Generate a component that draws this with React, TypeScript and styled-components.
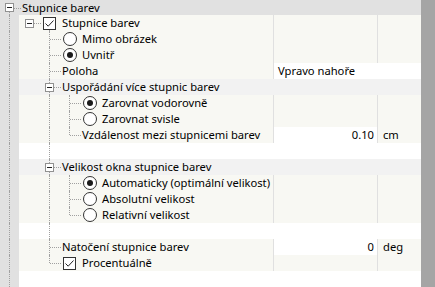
import * as React from "react";
import styled, { createGlobalStyle } from "styled-components";

const GlobalStyle = createGlobalStyle`
  html, body {
    margin: 0;
    padding: 0;
    background: #ffffff;
  }
  body {
    font-family: "Noto Sans", "Open Sans", sans-serif;
    font-size: 11.2px;
    color: #000000;
  }
`;

type Tone = "header" | "group" | "item" | "blank";

interface SlotDef {
  up?: boolean;
  down?: boolean;
  right?: boolean;
  mark?: "expander" | "check" | "radio" | "radioOn";
}

interface RowDef {
  tone: Tone;
  slots: SlotDef[];
  label?: string;
  value?: string;
  unit?: string;
  edit?: "value" | "wide";
}

const Window = styled.div`
  display: flex;
  width: 435px;
  height: 287px;
  overflow: hidden;
`;

const Grid = styled.div`
  flex: 1;
  display: flex;
  flex-direction: column;
  min-width: 0;
`;

const ScrollTrack = styled.div`
  width: 14px;
  background: #a5a5a5;
`;

const toneBg: Record<Tone, string> = {
  header: "#e1e1e1",
  group: "#f2f2f2",
  item: "#f8f8f3",
  blank: "#ffffff",
};

const Row = styled.div<{ $tone: Tone }>`
  display: flex;
  height: ${(p) => (p.$tone === "header" ? 15 : 16)}px;
  line-height: ${(p) => (p.$tone === "header" ? 15 : 16)}px;
  background: ${(p) => toneBg[p.$tone]};
  white-space: nowrap;
`;

const Filler = styled.div`
  flex: 1;
  display: flex;
  background: #ffffff;
`;

const LabelCell = styled.div`
  flex: 1;
  display: flex;
  align-items: stretch;
  min-width: 0;
`;

const Slot = styled.div<{ $first: boolean; $up: boolean; $down: boolean; $right: boolean }>`
  position: relative;
  flex: 0 0 ${(p) => (p.$first ? 19 : 20)}px;
  display: flex;
  align-items: center;
  justify-content: ${(p) => (p.$first ? "flex-start" : "center")};
  padding-left: ${(p) => (p.$first ? 5 : 1)}px;
  box-sizing: border-box;
  background: ${(p) => (p.$first ? "#e1e1e1" : "transparent")};

  &::before {
    content: "";
    display: ${(p) => (p.$up || p.$down ? "block" : "none")};
    position: absolute;
    left: ${(p) => (p.$first ? 9 : 10)}px;
    top: ${(p) => (p.$up ? 0 : 8)}px;
    bottom: ${(p) => (p.$down ? 0 : 8)}px;
    border-left: 1px dotted #a0a0a0;
  }

  &::after {
    content: "";
    display: ${(p) => (p.$right ? "block" : "none")};
    position: absolute;
    left: ${(p) => (p.$first ? 10 : 11)}px;
    right: -2px;
    top: 8px;
    border-top: 1px dotted #a0a0a0;
  }
`;

const Expander = styled.span`
  position: relative;
  z-index: 1;
  width: 9px;
  height: 9px;
  box-sizing: border-box;
  border: 1px solid #919191;
  background: #ffffff;
  display: flex;
  align-items: center;
  justify-content: center;

  &::before {
    content: "";
    width: 5px;
    height: 1px;
    background: #222222;
  }
`;

const CheckBox = styled.span`
  position: relative;
  z-index: 1;
  width: 13px;
  height: 13px;
  box-sizing: border-box;
  border: 1px solid #333333;
  background: #ffffff;
  display: flex;
  align-items: center;
  justify-content: center;
`;

const Radio = styled.span<{ $on: boolean }>`
  position: relative;
  z-index: 1;
  width: 14px;
  height: 14px;
  box-sizing: border-box;
  border: 1px solid #333333;
  border-radius: 50%;
  background: #ffffff;
  display: flex;
  align-items: center;
  justify-content: center;

  &::before {
    content: "";
    display: ${(p) => (p.$on ? "block" : "none")};
    width: 6px;
    height: 6px;
    border-radius: 50%;
    background: #1a1a1a;
  }
`;

const Label = styled.span`
  padding-left: 3px;
`;

const ValueCell = styled.div<{ $edit: boolean; $wide: boolean }>`
  flex: 0 0 ${(p) => (p.$wide ? 148 : 104)}px;
  border-left: 1px solid #e0e0e0;
  background: ${(p) => (p.$edit ? "#ffffff" : "transparent")};
  text-align: ${(p) => (p.$wide ? "left" : "right")};
  padding: ${(p) => (p.$wide ? "0 0 0 4px" : "0 3px 0 0")};
  box-sizing: border-box;
  height: 16px;
`;

const UnitCell = styled.div`
  flex: 0 0 44px;
  border-left: 1px solid #e0e0e0;
  padding-left: 5px;
  box-sizing: border-box;
`;

const CheckMark = () => (
  <svg width="11" height="11" viewBox="0 0 11 11">
    <path d="M1.5 5.5 L4.2 8.2 L9.5 2.5" fill="none" stroke="#222" strokeWidth="1" />
  </svg>
);

const pass: SlotDef = { up: true, down: true };
const empty: SlotDef = {};
const branch: SlotDef = { up: true, down: true, right: true };
const end: SlotDef = { up: true, right: true };

const rows: RowDef[] = [
  { tone: "header", slots: [{ down: true, right: true, mark: "expander" }], label: "Stupnice barev" },
  {
    tone: "item",
    slots: [pass, { right: true, mark: "expander" }, { down: true, mark: "check" }],
    label: "Stupnice barev",
    value: "",
  },
  { tone: "item", slots: [pass, empty, branch, { mark: "radio" }], label: "Mimo obrázek", value: "" },
  { tone: "item", slots: [pass, empty, branch, { mark: "radioOn" }], label: "Uvnitř", value: "" },
  { tone: "item", slots: [pass, empty, branch], label: "Poloha", value: "Vpravo nahoře", edit: "wide" },
  { tone: "group", slots: [pass, empty, { ...branch, mark: "expander" }], label: "Uspořádání více stupnic barev" },
  { tone: "item", slots: [pass, empty, pass, branch, { mark: "radioOn" }], label: "Zarovnat vodorovně", value: "" },
  { tone: "item", slots: [pass, empty, pass, branch, { mark: "radio" }], label: "Zarovnat svisle", value: "" },
  {
    tone: "item",
    slots: [pass, empty, pass, end],
    label: "Vzdálenost mezi stupnicemi barev",
    value: "0.10",
    unit: "cm",
    edit: "value",
  },
  { tone: "blank", slots: [pass, empty, pass] },
  { tone: "group", slots: [pass, empty, { ...branch, mark: "expander" }], label: "Velikost okna stupnice barev" },
  {
    tone: "item",
    slots: [pass, empty, pass, branch, { mark: "radioOn" }],
    label: "Automaticky (optimální velikost)",
    value: "",
  },
  { tone: "item", slots: [pass, empty, pass, branch, { mark: "radio" }], label: "Absolutní velikost", value: "" },
  { tone: "item", slots: [pass, empty, pass, end, { mark: "radio" }], label: "Relativní velikost", value: "" },
  { tone: "blank", slots: [pass, empty, pass] },
  {
    tone: "item",
    slots: [pass, empty, branch],
    label: "Natočení stupnice barev",
    value: "0",
    unit: "deg",
    edit: "value",
  },
  { tone: "item", slots: [pass, empty, end, { mark: "check" }], label: "Procentuálně", value: "" },
];

const Mark = ({ kind }: { kind?: SlotDef["mark"] }) => {
  if (kind === "expander") return <Expander />;
  if (kind === "check")
    return (
      <CheckBox>
        <CheckMark />
      </CheckBox>
    );
  if (kind === "radio" || kind === "radioOn") return <Radio $on={kind === "radioOn"} />;
  return null;
};

const TreeSlots = ({ slots }: { slots: SlotDef[] }) => (
  <>
    {slots.map((s, i) => (
      <Slot key={i} $first={i === 0} $up={!!s.up} $down={!!s.down} $right={!!s.right}>
        <Mark kind={s.mark} />
      </Slot>
    ))}
  </>
);

export default function App() {
  return (
    <>
      <GlobalStyle />
      <Window>
        <Grid>
          {rows.map((r, i) => (
            <Row key={i} $tone={r.tone}>
              <LabelCell>
                <TreeSlots slots={r.slots} />
                {r.label ? <Label>{r.label}</Label> : null}
              </LabelCell>
              {r.value !== undefined ? (
                <ValueCell $edit={!!r.edit} $wide={r.edit === "wide"}>
                  {r.value}
                </ValueCell>
              ) : null}
              {r.value !== undefined && r.edit !== "wide" ? <UnitCell>{r.unit}</UnitCell> : null}
            </Row>
          ))}
          <Filler>
            <TreeSlots slots={[pass]} />
          </Filler>
        </Grid>
        <ScrollTrack />
      </Window>
    </>
  );
}
